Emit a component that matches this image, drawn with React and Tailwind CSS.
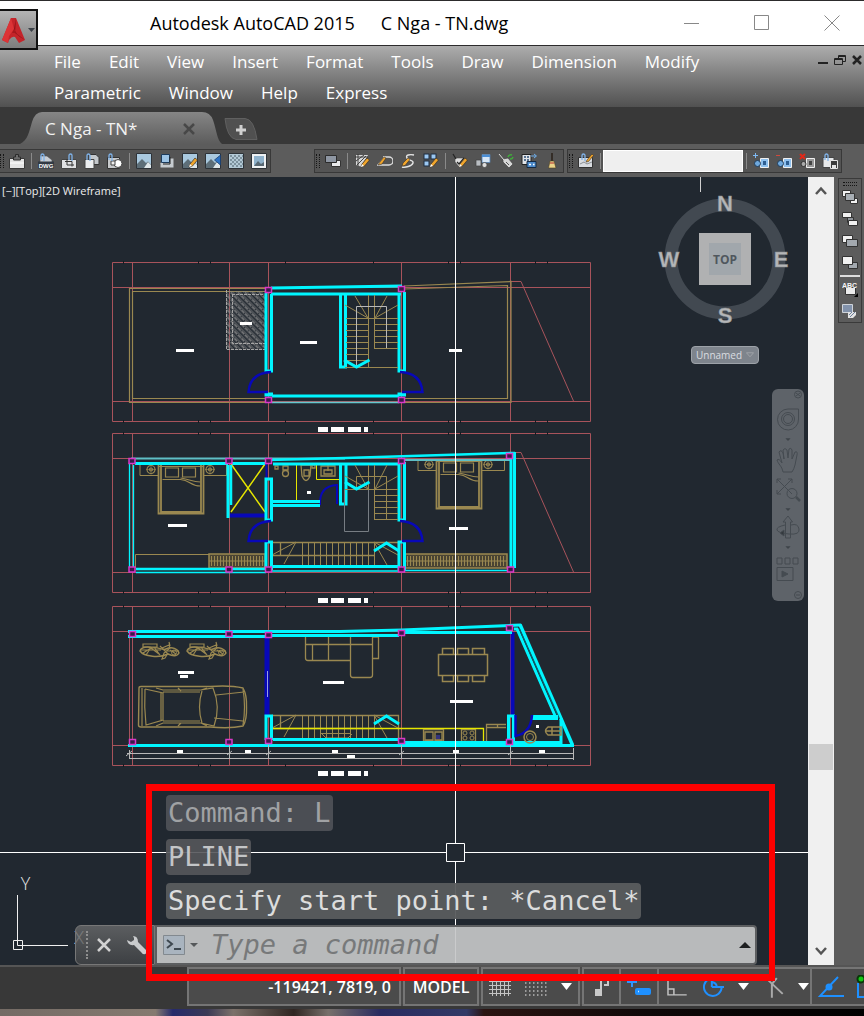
import React, { useState } from "react";

const MENUS = [
  "File", "Edit", "View", "Insert", "Format", "Tools", "Draw",
  "Dimension", "Modify", "Parametric", "Window", "Help", "Express",
];

const RED = "#a8535b";
const BROWN = "#9a8850";
const CYAN = "#00f6ff";
const BLUE = "#0808b8";
const MAGENTA = "#d838c8";
const YELLOW = "#e6e600";

const range = (from, to, step) => {
  const out = [];
  for (let v = from; v <= to; v += step) out.push(v);
  return out;
};

/* ---------- toolbar icons ---------- */

const Pencil = () => (
  <>
    <path d="M7 14 8 11 13 5 15.5 7 10.5 13Z" fill="#f0a52c" stroke="#3a3126" strokeWidth=".7" />
    <path d="M7 14 8 11 10 13Z" fill="#fff" />
  </>
);

const Clip = ({ x = 4 }) => (
  <path d={`M${x} 7V2.5a1.5 1.5 0 0 1 3 0V8`} fill="none" stroke="#7fb2e8" strokeWidth="1.3" />
);

const Picture = () => (
  <>
    <path d="M.5 .5h15v15H.5z" fill="#a9c9df" stroke="#2e3338" />
    <path d="M1 11 6 6l4 4 2-1.5 3 3V15H1Z" fill="#5d6e78" />
    <path d="M8 15l4-6 3 3v3Z" fill="#dfe7ea" />
  </>
);

const ICONS = {
  paste: (
    <>
      <path d="M.5 5.5h15v10H.5z" fill="#e4e4e4" stroke="#3a3a3a" />
      <path d="M4.5 7V4h2V1.5h3V4h2v3z" fill="#6c6c6c" stroke="#2c2c2c" />
      <path d="M1 10h14" stroke="#fff" />
    </>
  ),
  dwg: (
    <>
      <path d="M2 3h7l5 4v7H2z" fill="#c9ced4" stroke="#4a4a4a" strokeWidth=".6" />
      <Clip x={3} />
      <rect x="0" y="8.5" width="16" height="7" fill="#333a44" />
      <text x="8" y="14.5" textAnchor="middle" fontSize="6" fontWeight="700" fill="#fff" fontFamily="Liberation Sans, sans-serif">DWG</text>
    </>
  ),
  crop: (
    <>
      <path d="M.5 6.5h15v9H.5z" fill="#dfe0e2" stroke="#444" />
      <path d="M4 8.5h7v5M6 6v6h7" fill="none" stroke="#333" />
      <Clip x={8} />
    </>
  ),
  sheets: (
    <>
      <path d="M5 1.5h7l3 3v7H5z" fill="#c4c8cc" stroke="#333" />
      <path d="M1 6.5h9v9H1z" fill="#eceef0" stroke="#444" />
      <Clip x={3} />
    </>
  ),
  shapes: (
    <>
      <path d="M.5 4.5h12v11H.5z" fill="#c8cacc" stroke="#333" />
      <circle cx="11" cy="10.5" r="4" fill="#fff" stroke="#444" />
      <path d="M4 8h4v4H4z" fill="#eee" stroke="#444" />
      <Clip x={2} />
    </>
  ),
  picture: <Picture />,
  clipPicture: (
    <>
      <path d="M5 5h10v10H1v-4" fill="#c7ccd0" stroke="#555" />
      <path d="M2.5 1.5h8v8h-8z" fill="#9cc4e6" stroke="#1c3b5c" />
      <path d="M11 4v7H4" fill="none" stroke="#222" />
    </>
  ),
  editPicture: (
    <>
      <Picture />
      <Pencil />
    </>
  ),
  flagPicture: (
    <>
      <Picture />
      <path d="M15.5 2v10L9.5 7Z" fill="#2c72c4" stroke="#173b6a" strokeWidth=".7" />
    </>
  ),
  checker: (
    <>
      <path d="M.5 .5h15v15H.5z" fill="#b3c9d6" stroke="#2e3338" />
      <path d="M2 3h13M2 7h13M2 11h13" stroke="#7d929e" strokeWidth="2" strokeDasharray="2 2" />
      <path d="M4 5h11M4 9h11M4 13h11" stroke="#7d929e" strokeWidth="2" strokeDasharray="2 2" />
    </>
  ),
  frame: (
    <>
      <path d="M.5 .5h15v15H.5z" fill="#eef1f3" stroke="#2e3338" />
      <path d="M3 3h10v10H3z" fill="#8fb2cc" />
      <path d="M3 13l4-5 3 3 3-2v4z" fill="#586873" />
    </>
  ),
  order: (
    <>
      <path d="M6.5 7.5h9v6h-9z" fill="#e9eaec" stroke="#333" />
      <path d="M.5 2.5h11v7H.5z" fill="#8e96a2" stroke="#2b2b2b" />
    </>
  ),
  hatchEdit: (
    <>
      <path d="M2 2h12L8 14 2 12z" fill="#d9d9d9" />
      <path d="M1 4h13M4 1v12M2 8l8-6M3 12l9-9M7 13l6-8" stroke="#333" strokeWidth=".9" />
      <Pencil />
    </>
  ),
  polyEdit: (
    <>
      <path d="M6 4h6a3.5 3.5 0 0 1 0 8H1l7-8" fill="none" stroke="#ddd" strokeWidth="1.4" />
      <path d="M1 12l2-3 4-5 2 1-4 6z" fill="#f0a52c" stroke="#3a3126" strokeWidth=".6" />
    </>
  ),
  splineEdit: (
    <>
      <path d="M14 2c-4-1-9 0-7 3s7 2 6 5-8 5-11 4" fill="none" stroke="#e4e4e4" strokeWidth="1.4" />
      <path d="M2 13l1-3 5-5 2 1.5-5 6z" fill="#f0a52c" stroke="#3a3126" strokeWidth=".6" />
    </>
  ),
  arrayEdit: (
    <>
      {[[1, 1], [8, 1], [1, 8]].map(([x, y]) => (
        <rect key={`${x}-${y}`} x={x} y={y} width="5" height="5" fill="#9cc8f2" stroke="#1c2c40" />
      ))}
      <Pencil />
    </>
  ),
  attEdit: (
    <>
      <path d="M3 5h10v4l-5 6-5-6z" fill="#dedede" stroke="#444" strokeWidth=".6" />
      <path d="M1 1l3 5M5 9l2 2 5-6" fill="none" stroke="#222" strokeWidth="1.2" />
      <Pencil />
    </>
  ),
  blockAtt: (
    <>
      <path d="M7 1.5h8v8H7z" fill="#d7e7f7" stroke="#5581b0" strokeWidth=".8" />
      <path d="M7 2h8v2H7z" fill="#4a8ed6" />
      <path d="M1 7h5v6H1z" fill="#b9bdc2" stroke="#444" strokeWidth=".7" />
      <circle cx="9.5" cy="12" r="2.5" fill="#ddd" stroke="#444" strokeWidth=".7" />
    </>
  ),
  sync: (
    <>
      <path d="M5 6l5-1 5 6-4 4-6-6z" fill="#d6d6d6" stroke="#444" strokeWidth=".7" />
      <path d="M1 1l5 6" stroke="#ddd" />
      <path d="M8 9l3 3" stroke="#555" />
      <path d="M10 4a3 3 0 0 1 4-2M15 4a3 3 0 0 1-3 2" fill="none" stroke="#3fae3a" strokeWidth="1.5" />
    </>
  ),
  extract: (
    <>
      <path d="M1 1.5h9v10H1z" fill="#e1e4e8" stroke="#222" />
      <path d="M3 4h2M6 4h2M3 7h2M6 7h2" stroke="#2b4c74" strokeWidth="1.5" />
      <path d="M6 8.5h9v6H6z" fill="#4d8bcb" stroke="#152a44" />
      <path d="M8 11.5h2M12 11.5h1.5" stroke="#fff" strokeWidth="1.5" />
      <path d="M10 3h5M13 1l2.5 2L13 5" fill="none" stroke="#6faeea" />
    </>
  ),
  broom: (
    <>
      <path d="M8 0v8" stroke="#2a2018" strokeWidth="1.5" />
      <path d="M6 8h4l2 7H4.5z" fill="#ecd48a" stroke="#4d4020" strokeWidth=".6" />
      <path d="M6 10h4" stroke="#b03030" />
    </>
  ),
  sheetEdit: (
    <>
      <path d="M.5 4.5h14v10H.5z" fill="#d9dce0" stroke="#333" />
      <path d="M2 11l4-2 3 2 5-2" fill="none" stroke="#8b8f94" />
      <Clip x={4} />
      <path d="M8 9l1-2 5-6 1.5 1.5-5 6z" fill="#f0a52c" stroke="#3a3126" strokeWidth=".6" />
    </>
  ),
  viewAdd: (
    <>
      <path d="M7.5 5.5h8v9h-8z" fill="#8ec0ee" stroke="#f0f0f0" />
      <path d="M10 8h3v4h-3z" fill="#2d5e92" />
      <circle cx="4.5" cy="10.5" r="3" fill="#6fa8dc" stroke="#1e3c5c" />
      <path d="M2.5 0v5M0 2.5h5" stroke="#7fbbf5" />
    </>
  ),
  viewSub: (
    <>
      <path d="M7.5 5.5h8v9h-8z" fill="#8ec0ee" stroke="#f0f0f0" />
      <path d="M10 8h3v4h-3z" fill="#2d5e92" />
      <circle cx="4.5" cy="10.5" r="3" fill="#6fa8dc" stroke="#1e3c5c" />
      <path d="M0 2.5h4" stroke="#d04a3c" />
    </>
  ),
  viewDel: (
    <>
      <path d="M7.5 5.5h8v9h-8z" fill="#999" stroke="#eee" />
      <path d="M10 8h3v4h-3z" fill="#444" />
      <circle cx="4.5" cy="11" r="2.5" fill="#aaa" stroke="#333" />
      <path d="M1 1l5 5M6 1 1 6" stroke="#e02818" strokeWidth="2" />
    </>
  ),
  saveView: (
    <>
      <path d="M1 4.5h11v10H1z" fill="#e6e8ea" stroke="#444" />
      <Clip x={3} />
      <path d="M8.5 7.5h7v8h-7z" fill="#3c3c3c" stroke="#e6e6e6" />
      <path d="M10 12h4v3h-4z" fill="#e6e6e6" />
    </>
  ),
  toFront: (
    <>
      <path d="M.5 1.5h8v6h-8zM8.5 9.5h7v5h-7z" fill="#f1f1f1" stroke="#333" />
      <path d="M3.5 4.5h9v7h-9z" fill="#a7adb3" stroke="#333" />
    </>
  ),
  toBack: (
    <>
      <path d="M5.5 6.5h6v5h-6z" fill="#8d9298" stroke="#333" />
      <path d="M.5 1.5h9v5h-9zM6.5 9.5h9v5h-9z" fill="#f1f1f1" stroke="#333" />
    </>
  ),
  above: (
    <>
      <path d="M.5 2.5h10v7H.5z" fill="#f1f1f1" stroke="#333" />
      <path d="M4.5 6.5h11v7h-11z" fill="#a3a9af" stroke="#333" />
    </>
  ),
  under: (
    <>
      <path d="M6.5 7.5h9v6h-9z" fill="#a3a9af" stroke="#333" />
      <path d="M.5 1.5h10v8H.5z" fill="#f1f1f1" stroke="#333" />
    </>
  ),
  abc: (
    <>
      <path d="M3.5 6.5h10v7h-10z" fill="#ececec" stroke="#333" />
      <text x="0" y="7" fontSize="7" fontWeight="700" fill="#f5f5f5" fontFamily="Liberation Sans, sans-serif">ABC</text>
      <path d="M16 12v4h-4z" fill="#000" />
    </>
  ),
  hatchBack: (
    <>
      <path d="M.5 1.5h10v8H.5z" fill="#8292ab" stroke="#cfd4da" />
      <path d="M6 9h8v3l-3 3H6z" fill="#e3e3e3" />
      <path d="M8 14l5-5M7 12l3-3" stroke="#6c7f9c" />
    </>
  ),
};

const ToolIcon = ({ name }) => (
  <svg viewBox="0 0 16 16" className="h-4 w-4" aria-hidden>
    {ICONS[name]}
  </svg>
);

const ToolButton = ({ name }) => (
  <button aria-label={name} className="flex h-5 w-[23px] shrink-0 items-center justify-center hover:bg-white/10">
    <ToolIcon name={name} />
  </button>
);

const Divider = () => <span className="ml-[3px] mr-0.5 h-4 w-px shrink-0 bg-[#8a8a8a]" />;

const Grip = ({ className = "mx-px" }) => (
  <span className={`h-3.5 w-1 shrink-0 border-x border-dotted border-[#161616] ${className}`} />
);

const ToolGroup = ({ children, className = "" }) => (
  <div className={`flex h-6 items-center border border-[#383838] bg-[#545454] ${className}`}>{children}</div>
);

/* ---------- floor plans ---------- */

const Line = ({ d, c = BROWN, w = 1, ...rest }) => (
  <path d={d} fill="none" stroke={c} strokeWidth={w} {...rest} />
);

const Tags = ({ items }) =>
  items.map(([x, y, w, h = 3]) => <rect key={`${x}-${y}`} x={x} y={y} width={w} height={h} fill="#fff" />);

const Columns = ({ items }) =>
  items.map(([x, y]) => (
    <rect key={`${x}-${y}`} x={x - 3} y={y - 2.5} width="6" height="5" fill="#3a1a4a" stroke={MAGENTA} strokeWidth="1.5" />
  ));

// Axis grid shared by the three floors
const Axes = ({ top }) => (
  <g>
    <Line
      c={RED}
      d={`M112.5 ${top}.5H590.5V${top + 159}.5H112.5Z M132.5 ${top}V${top + 159} M229.5 ${top}V${top + 159} M268.5 ${top}V${top + 159} M401.5 ${top}V${top + 159} M510.5 ${top}V${top + 159} M112 ${top + 25}.5H590 M112 ${top + 139}.5H590`}
    />
    {[123, 198, 210, 285, 373, 448, 460, 535, 547].map((x) => (
      <Line key={x} c="#141a20" d={`M${x}.5 ${top - 1}v3 M${x}.5 ${top + 158}v3`} />
    ))}
    <Tags items={[[318, top + 165, 10, 5], [331, top + 165, 13, 5], [348, top + 165, 13, 5], [364, top + 165, 4, 5]]} />
  </g>
);

const Bed = ({ x, y }) => (
  <g transform={`translate(${x} ${y})`}>
    <Line w={1.8} d="M0 0V48.5H45V0 M2.5 0V47H42.5V0" />
    <Line w={1.2} d="M0 1.5H45 M7 3h13v9H7z M24 3h13v9H24z M4 14.5H22C32 15 31 21 42 21 M22 13C30 14 34 17 42 17" />
    <Line d="M-18.5 0V10.5H0 M45 10.5H68V0" />
    {[-7.5, 51.5].map((cx) => (
      <g key={cx}>
        <circle cx={cx} cy="4.5" r="4" fill="none" stroke={BROWN} strokeWidth="1.2" />
        <circle cx={cx} cy="4.5" r="1.5" fill="none" stroke={BROWN} strokeWidth="1.2" />
        <Line d={`M${cx - 5} 4.5h10 M${cx} -.5v10`} w={0.6} />
      </g>
    ))}
  </g>
);

const LongStair = ({ y }) => (
  <g>
    <Line d={`M272 ${y}.5H398.5V${y + 23} M280.5 ${y + 13}V${y} M272 ${y + 13}.5H375`} w={1.3} />
    <Line d={range(302, 375, 6).map((x) => `M${x}.5 ${y}V${y + 23}`).join(" ")} />
    <Line d={`M296 ${y}L272 ${y + 13} M296 ${y}L284 ${y + 22} M374 ${y}L387 ${y + 23} M374 ${y}L398 ${y + 13}`} />
    <Line c={CYAN} w={3} d={`M374 ${y + 9}L386.5 ${y + 1}L399 ${y + 9}`} />
  </g>
);

const Wardrobe = ({ x, y, w }) => (
  <g>
    <rect x={x} y={y} width={w} height="14" fill="#4a4433" stroke={BROWN} strokeWidth="1.5" />
    <Line d={range(x + 2, x + w - 2, 3).map((v) => `M${v}.5 ${y + 2}v10`).join(" ")} />
    <Line d={`M${x} ${y + 7}h${w}`} />
  </g>
);

const Motorbike = ({ x }) => (
  <g transform={`translate(${x} 642)`}>
    <Line w={1.4} d="M0 9C1 5 8 4 12 6C18 4 22 9 26 7C32 4 38 7 39 11C37 15 32 14 28 12C20 16 4 15 0 9Z" />
    <Line w={1.2} d="M3 2h14v3H3z M1 8h20 M3 11l8-5 8 6 M6 13l4-6 M14 5l6 8 M22 6l7-3 1 3-6 5 -2 6 3-1 3-5 M20 4l8 8 M30 8l6 4 M29 0l1 4 M25 9h14" />
    <circle cx="34" cy="10.5" r="2.5" fill="none" stroke={BROWN} />
  </g>
);

const Car = () => (
  <g>
    <Line w={1.4} d="M139 688Q139 686.5 141 686.5H210Q230 685 243 688Q247 695 246.5 707Q247 720 243 726Q230 729 210 727H141Q138.5 727 138.5 725Z" />
    <Line w={1.2} d="M142 688V726 M145 689L163 693V720L146 725Q144 707 145 689 M161 693V720 M156 688L163 690H201L207 688 M156 726L163 723H201L207 726 M202 691Q197 707 202 723 M201 690L213 688Q221 707 214 726L201 723 M216 695L244 692 M214 718L243 721 M178 688l3 3 M178 726l3-3 M163 692H200 M163 721H200 M243 689Q246 707 243 725" />
  </g>
);

const TopFloor = () => (
  <g>
    <Axes top={262} />
    <Line c={RED} d="M510 281.5H521L573.5 401" />
    <Line w={1.2} d="M268 288.5H129.5V402.5H268 M268 291.5H132.5V398.5H268 M404 286L511 281.5V402.5H404 M404 289L507.5 285.5V398.5H404" />
    <rect x="226" y="291" width="40" height="58.5" fill="url(#hatch)" />
    <Line c="#a5a5a5" d="M226.5 290V349.5H265 M232.5 294V343.5H265 M232 294.5H264" strokeDasharray="3 1" />
    {/* walls */}
    <Line c={CYAN} w={3} d="M271 288L402 286 M271 294H401 M266 293V371H271.5V294 M340.5 294V367H345.5V294 M399 293V371H404.5V292 M272 396H399" />
    <Line c="#65c8ce" d="M272 402.5H399" w={1.5} />
    <Line c={CYAN} w={4} d="M264.5 394.5H273 M397.5 394.5H406" />
    <Columns items={[[268.5, 290], [268.5, 400], [401.5, 289], [401.5, 400]]} />
    <Line c={BLUE} w={2.5} d="M268 392H248.5Q250 373 271 372 M402 392H422.5Q421 373 400 372" />
    {/* stair */}
    <Line d={range(318, 360, 6).map((y) => `M346 ${y}.5H368`).join(" ")} />
    <Line d={range(318, 348, 6).map((y) => `M374 ${y}.5H398`).join(" ")} />
    <Line d="M368.5 295V367 M374.5 295V348 M368 318.5H374 M368 318L345 305 M368 318L355 296 M375 318L387 296 M375 318L398 305 M345 367.5H398" />
    <Line c="#b9b9b9" d="M356.5 366V306.5H386.5V348" />
    <Line c={CYAN} w={3} d="M344 360L356.5 367L369.5 360" />
    <Tags items={[[176, 349, 18], [240, 322, 12], [300, 341, 17], [449, 349, 13]]} />
  </g>
);

const MiddleFloor = () => (
  <g>
    <Axes top={433} />
    <Line c={RED} d="M512 452.5H521L573.5 572" />
    <Bed x={158.5} y={465} />
    <Bed x={436.5} y={460} />
    <Line d="M135.5 568V554.5H210" />
    <Wardrobe x={209} y={554} w={56} />
    <Wardrobe x={405} y={554} w={102} />
    <LongStair y={542} />
    {/* lift shaft */}
    <Line c={YELLOW} w={1.5} d="M231 464L265 512 M265 464L231 512" />
    <Line c={BLUE} w={4} d="M230 515.5H266" />
    {/* bathroom */}
    <Line c={YELLOW} d="M296.5 465V501.5H272 M316.5 465V479.5H339" />
    <Line w={1.3} d="M301 465h10l-1 11q-4 9-8 0z M304 470h5v6h-5z M321 466h14v10h-14z M324 470h8v4h-8z M328 465v6" />
    <Line w={1.3} d="M283 466h5v4h-5z M275 466h3v3h-3z M312 465h3v3h-3z" />
    <circle cx="285.5" cy="473.5" r="3" fill="none" stroke={BROWN} strokeWidth="1.3" />
    <Line c={BLUE} w={2} d="M320 505Q319 486 337 485V504 M266.5 463V479" />
    {/* walls */}
    <Line c="#5fbfc6" w={2} d="M131 458.5H345 M404 460H510" />
    <Line c={CYAN} w={3} d="M135 463.5H228 M232 463.5H265 M273 464H399 M228 465V518 M266 479V520H271.5V479Z M340.5 464V504H346V464 M272 501.5H320 M272 505.5H320 M399 464V520H404.5V462 M266 570V542H271.5V570 M399 570V542H404.5V570 M272 566.5H399" />
    <Line c={CYAN} w={2.5} d="M268 460L345 458L512 453H515 M231 465V505 M136 569H266" />
    <Line c={CYAN} w={3} d="M511 458V567 M514.5 452V568" />
    <Line c={CYAN} w={1.3} d="M129.5 463V568 M133.5 465V567 M136 572.5H266 M272 571H399 M404 570.5H508" />
    <Columns items={[[132, 461], [229, 461], [268.5, 461], [401.5, 461], [509.5, 456], [132, 569.5], [229, 569.5], [268.5, 569.5], [401.5, 569.5], [510.5, 569.5]]} />
    <Line c={BLUE} w={2.5} d="M268 541H248.5Q250 522 271 521 M402 541H422.5Q421 522 400 521" />
    {/* stair */}
    <Line d={range(489, 519, 6).map((y) => `M374 ${y}.5H398`).join(" ")} />
    <Line d="M368.5 465V531 M374.5 465V519 M386.5 519V476.5H356.5V490 M345 489.5H374 M368 489L345 476 M368 489L355 465 M375 489L387 465 M375 489L398 476" />
    <Line c="#777d83" d="M344.5 490V531.5H368.5V490" />
    <Line c={CYAN} w={3} d="M345 482L356.5 489L369.5 482" />
    <Tags items={[[168, 524, 19], [449, 527, 19], [307, 491, 4]]} />
  </g>
);

const GroundFloor = () => (
  <g>
    <Axes top={606} />
    <Line c={RED} d="M129.5 637V742" />
    <Motorbike x={140} />
    <Motorbike x={187} />
    <Car />
    {/* living room */}
    <Line w={1.3} d="M305.5 637V658Q305.5 660.5 308 660.5H350 M312.5 644V660 M328.5 637V660 M305 644.5H372.5 M350.5 637V675Q350.5 677.5 353 677.5H370Q372.5 677.5 372.5 675V637 M372.5 658.5H378.5V637H372.5" />
    {/* dining table */}
    <Line w={1.5} d="M438.5 654.5H487.5V675.5H438.5Z M442.5 654V648.5H453.5V654 M457.5 654V648.5H468.5V654 M472.5 654V648.5H484.5V654 M442.5 676V681.5H453.5V676 M457.5 676V681.5H468.5V676 M472.5 676V681.5H484.5V676" />
    {/* kitchen */}
    <Line w={1.3} d="M423.5 729.5H443.5V741.5H423.5Z M425 732h8v8h-8z M435 732h7v8h-7z M461.5 729.5H475.5V741.5H461.5Z M486.5 741V724.5H506 M486 727.5H506 M497.5 724V727" />
    {[[465, 733], [472, 733], [465, 738], [472, 738]].map(([cx, cy]) => (
      <circle key={`${cx}-${cy}`} cx={cx} cy={cy} r="2" fill="none" stroke={BROWN} />
    ))}
    <rect x="436" y="735" width="4" height="4" fill="#34347c" />
    <LongStair y={715} />
    <Line d="M320 733.5H350 M322 734l4 4h22l4-4" />
    <Line c={YELLOW} d="M271.5 744V728.5H483.5V742" w={1.3} />
    {/* walls */}
    <Line c={BLUE} w={5} d="M267 637V716" />
    <Line c="#9aa0e0" d="M267.5 671V697" />
    <Line c={BLUE} w={4} d="M512.5 632V715" />
    <Line c={CYAN} w={3} d="M128 631.5H340L402 630L521 625 M128 636.5H268 M272 635.5H399 M404 632.5H512 M128 745.5H574 M266 740V716H271.5V740 M273 739.5H399 M404 742.5H561V718 M508.5 740V716H513.5V740Z" />
    <Line c={CYAN} w={3} d="M514 629H517L556.5 719" />
    <Line c={CYAN} w={3.5} d="M520 624.5L572.5 745" />
    <Line c="#0a5e6c" w={1.3} d="M519.5 629L559.5 719" />
    <Line c={CYAN} w={5} d="M532 717.5H558" />
    <Line c={BLUE} w={2.5} d="M515.5 715V736Q531 733 532 715" />
    <Line w={1.5} d="M561 727H548Q543 731 548 735H561Z M552 727V735 M546 731H561" />
    <circle cx="530" cy="737" r="6" fill="none" stroke={BROWN} strokeWidth="1.5" />
    <circle cx="530" cy="737" r="3.5" fill="none" stroke={BROWN} />
    <Columns items={[[132.5, 634], [229, 634], [268.5, 635], [401.5, 633], [509.5, 628], [132.5, 742], [229, 742], [268.5, 741], [401.5, 741], [509.5, 742]]} />
    {/* dimensions */}
    <Line c="#b8b8b8" d="M127 753.5H574 M129 758.5H574 M129.5 750V759 M573.5 748V760 M229.5 745V759 M268.5 745V759 M401.5 745V759 M510.5 745V759 M126 756l6-5 M227 755l5-4 M266 755l5-4 M399 755l5-4 M508 755l5-4" />
    <Tags items={[[178, 671, 16], [180, 675, 8], [323, 681, 21], [450, 700, 23], [536, 725, 3], [177, 750, 6], [245, 750, 6], [332, 750, 6], [347, 755, 8], [453, 750, 6], [539, 750, 6]]} />
  </g>
);

const Drawing = () => (
  <svg className="absolute inset-0 h-full w-full" role="img" aria-label="Floor plans">
    <defs>
      <pattern id="hatch" width="5" height="5" patternUnits="userSpaceOnUse" patternTransform="rotate(-45)">
        <path d="M0 0V5 M1.5 0V4 M3 0V5" stroke="#8f8f8f" strokeWidth=".8" />
      </pattern>
    </defs>
    <g transform="translate(0 -177)">
      <TopFloor />
      <MiddleFloor />
      <GroundFloor />
      {/* crosshair */}
      <Line c="#fff" d="M455.5 177V844 M455.5 862V965 M0 852.5H447 M464 852.5H808 M446.5 843.5H464.5V861.5H446.5Z" />
      <Line c="#d0d0d0" d="M700.5 177V192" />
      {/* UCS icon */}
      <Line c="#f0f0f0" d="M13.5 940.5H22.5V949.5H13.5Z M17.5 895V945.5H68" />
      <g fill="#e8e8e8" fontFamily="Open Sans, sans-serif" fontWeight="300" textAnchor="middle">
        <text x="25.5" y="890" fontSize="18">Y</text>
        <text x="79" y="944" fontSize="18">X</text>
      </g>
    </g>
  </svg>
);

/* ---------- canvas overlays ---------- */

const ViewCube = () => (
  <div className="absolute right-4 top-2 flex w-[136px] flex-col items-center">
    <svg viewBox="0 -8 136 152" className="h-[152px] w-[136px]" role="img" aria-label="View cube">
      <circle cx="69" cy="66" r="54" fill="none" stroke="#424951" strokeWidth="13" />
      <g fill="#b4b6b8" stroke="#8a8d90" strokeWidth=".4" fontFamily="Liberation Sans, Arial, sans-serif" fontWeight="700" fontSize="22" textAnchor="middle">
        <text x="69" y="18">N</text>
        <text x="125" y="74">E</text>
        <text x="69" y="130">S</text>
        <text x="13" y="74">W</text>
      </g>
      <rect x="43" y="40" width="52" height="52" fill="#b0b1b2" />
      <rect x="53" y="50" width="32" height="32" fill="#a1a7ac" />
      <text x="69" y="71" fill="#50575e" fontFamily="Open Sans, sans-serif" fontWeight="700" fontSize="12" textAnchor="middle">TOP</text>
    </svg>
    <button className="ml-0.5 mt-[9px] flex h-[18px] w-[68px] items-center justify-between rounded border border-[#9da2a8] bg-[#7e848c] px-1 text-[10px] text-[#dadde0]">
      Unnamed
      <svg viewBox="0 0 9 6" className="h-1.5 w-2" aria-hidden>
        <path d="M.5.5h8l-4 4.5z" fill="none" stroke="#a2a6aa" />
      </svg>
    </button>
  </div>
);

const NavBar = () => (
  <div className="absolute right-1 top-[212px] h-[212px] w-8 rounded-md bg-[#5e6369]">
    <svg viewBox="0 0 32 212" className="h-full w-full" fill="none" stroke="#454b51" role="img" aria-label="Navigation bar">
      <circle cx="26" cy="5.5" r="3.5" />
      <path d="M24 4l4 3M28 4l-4 3" />
      <path d="M16 20H26.5V30A10.5 10.5 0 1 1 16 20Z" />
      <circle cx="16" cy="30" r="6.5" />
      <circle cx="16" cy="30" r="4.5" />
      <path d="M14 49.5h4l-2 2zM14 119.5h4l-2 2zM14 157.5h4l-2 2z" fill="#33383d" />
      <path d="M11 83C10 77 6 75 5 71Q7 69 10 74L7 63Q9 60 11 64L12 70L11 61Q13 58 15 61L16 69L17 60Q19 58 20 61V70L23 63Q26 62 25 66L23 76Q22 80 20 83Z" />
      <path d="M5 90L20 105M20 90L5 105M5 94V90H9M16 90H20V94M5 101V105H9" />
      <circle cx="20" cy="104.5" r="5" />
      <path d="M24 108l4 4" strokeWidth="2.5" />
      <path d="M13.5 149V133H11L16 127L20.5 133H18.5V149Z" />
      <path d="M13 136Q4 138 5 141T17 145T27 140T19 136" />
      <path d="M8 144l4-3v6z" fill="#33383d" />
      <path d="M5 169h5v6H5zM13 169h5v6h-5zM21 169h5v6h-5zM5 178.5h16v13H5z" />
      <path d="M10 182v6l6-3z" fill="#454b51" />
      <circle cx="26" cy="206" r="3.5" />
      <path d="M24 206h4" />
    </svg>
  </div>
);

const HISTORY = [
  { text: "Command: L", tone: "bg-[#52555a]/85 text-[#a0a2a4]" },
  { text: "PLINE", tone: "bg-[#55575b]/90 text-[#c3c5c7]" },
  { text: "Specify start point: *Cancel*", tone: "bg-[#5a5c5e]/95 text-[#dcdddd]" },
];

const CommandLine = () => {
  const [value, setValue] = useState("");
  return (
    <div className="absolute bottom-0 left-[75px] right-[51px] font-['DejaVu_Sans_Mono',monospace] text-[27px]">
      <div className="ml-[91px] flex flex-col items-start gap-2 pb-1.5">
        {HISTORY.map(({ text, tone }) => (
          <p key={text} className={`h-9 whitespace-nowrap rounded px-0.5 leading-9 ${tone}`}>{text}</p>
        ))}
      </div>
      <div className="flex h-10 items-stretch">
        <div className="flex w-20 items-center rounded-l-md border border-[#777] bg-linear-to-b from-[#6a6b6c]/80 to-[#444648]/80 pl-2.5">
          <span className="h-7 border-l-2 border-dotted border-[#8f8f8f]" />
          <button aria-label="Close command line" className="ml-1 flex w-6 justify-center">
            <svg viewBox="0 0 14 14" className="h-3.5 w-3.5" stroke="#d2d2d2" strokeWidth="2.5" aria-hidden>
              <path d="M1 1l12 12M13 1 1 13" />
            </svg>
          </button>
          <button aria-label="Customize" className="ml-2.5">
            <svg viewBox="0 0 22 22" className="h-[22px] w-[22px]" aria-hidden>
              <path d="M7 2Q12 2 12 8L20 16Q22 19 19 20Q17 21 15 18L8 11Q2 12 1 6L5 8L8 6V4Z" fill="#c9cbcd" />
            </svg>
          </button>
        </div>
        <div className="flex min-w-0 flex-1 items-center rounded-r border-2 border-[#5c5e60] bg-[#c6c7c8]/92 pl-1.5 pr-1">
          <svg viewBox="0 0 22 20" className="h-5 w-[22px] shrink-0" aria-hidden>
            <path d="M.5.5h21v19H.5z" fill="#a9b4bf" stroke="#82898f" />
            <path d="M4 5l5 4-5 4M11 14h7" fill="none" stroke="#3e4850" strokeWidth="2" />
          </svg>
          <button aria-label="Recent commands" className="ml-1 shrink-0">
            <svg viewBox="0 0 10 6" className="h-1.5 w-2.5" aria-hidden><path d="M1 1h8L5 5z" fill="#55585a" /></svg>
          </button>
          <input
            aria-label="Command"
            value={value}
            onChange={(e) => setValue(e.target.value)}
            placeholder="Type a command"
            className="ml-3 h-9 min-w-0 flex-1 bg-transparent italic text-[#333] outline-none placeholder:text-[#77797a]"
          />
          <button aria-label="Expand history" className="shrink-0">
            <svg viewBox="0 0 12 6" className="h-1.5 w-3" aria-hidden><path d="M0 6h12L6 0z" fill="#1d1f20" /></svg>
          </button>
        </div>
      </div>
    </div>
  );
};

/* ---------- window frame ---------- */

const TitleBar = () => (
  <header className="relative flex h-[46px] items-center border-b border-t border-[#2c2b2c] bg-white text-black">
    <button aria-label="Application menu" className="absolute left-0 top-2 z-10 flex h-[41px] w-[38px] items-center border-2 border-l-0 border-[#111] bg-linear-to-b from-[#b4b4b4] to-[#7d7d7d]">
      <svg viewBox="0 0 36 28" className="h-7 w-9" aria-hidden>
        <path d="M11 2H16L25 24L19 27L15 21Q12 20 9 24L8 27L2 24Z" fill="#c4242a" />
        <path d="M11 2L14 13L9 20L8 27L2 24Z" fill="#dc3336" />
        <path d="M16 2L14 13L17 18L25 24L20 21L15 17Z" fill="#8e1218" />
        <path d="M12 17L14 13L16 17Z" fill="#a8181e" />
        <path d="M28 12h7l-3.5 4z" fill="#3b4148" />
      </svg>
    </button>
    <h1 className="flex flex-1 gap-[26px] whitespace-nowrap pl-[150px] text-[18px]">
      <span>Autodesk AutoCAD 2015</span>
      <span>C Nga - TN.dwg</span>
    </h1>
    <div className="flex items-center gap-[54px] pr-6">
      <button aria-label="Minimize"><svg viewBox="0 0 16 16" className="h-4 w-4" stroke="#888" aria-hidden><path d="M0 8.5h15" /></svg></button>
      <button aria-label="Maximize"><svg viewBox="0 0 16 16" className="h-4 w-4" stroke="#888" fill="none" aria-hidden><path d="M.5.5h14v14H.5z" /></svg></button>
      <button aria-label="Close"><svg viewBox="0 0 16 16" className="h-4 w-4" stroke="#888" aria-hidden><path d="M.5.5l15 15M15.5.5l-15 15" /></svg></button>
    </div>
  </header>
);

const MenuBar = () => (
  <div className="flex h-[61px] items-start bg-linear-to-b from-[#adadad] to-[#515151] pr-0.5">
    <nav className="flex flex-1 flex-wrap gap-x-7 pl-[54px] pr-8">
      {MENUS.map((m) => (
        <button key={m} className="h-[31px] text-[17px] leading-[31px] text-white">{m}</button>
      ))}
    </nav>
    <div className="mt-2 flex items-center gap-1.5 text-[#222]">
      <button aria-label="Minimize drawing"><svg viewBox="0 0 10 12" className="h-3 w-2.5" aria-hidden><path d="M0 9h10" stroke="currentColor" strokeWidth="2" /></svg></button>
      <button aria-label="Restore drawing">
        <svg viewBox="0 0 12 12" className="h-3 w-3" fill="none" stroke="currentColor" aria-hidden>
          <path d="M4.5 4V1.5h7V7.5H9M.5 4.5h8v6h-8zM.5 5.5h8M4 2.5h7" />
        </svg>
      </button>
      <button aria-label="Close drawing"><svg viewBox="0 0 10 12" className="h-3 w-2.5" aria-hidden><path d="M1 2l8 8M9 2l-8 8" stroke="currentColor" strokeWidth="2.5" /></svg></button>
    </div>
  </div>
);

const TabStrip = () => (
  <div className="flex h-[37px] items-end bg-[#383838] pl-5">
    <div className="relative h-8 w-[202px]">
      <svg viewBox="0 0 202 32" className="absolute inset-0 h-full w-full" aria-hidden>
        <defs>
          <linearGradient id="tab" x1="0" x2="0" y1="0" y2="1">
            <stop offset="0" stopColor="#868686" />
            <stop offset="1" stopColor="#5c5c5c" />
          </linearGradient>
        </defs>
        <path d="M0 32C8 28 9 20 12 10Q15 0 22 0H182Q190 0 193 8C197 20 197 28 202 32Z" fill="url(#tab)" />
      </svg>
      <div className="relative flex h-full items-center justify-between pl-[25px] pr-[27px] pt-0.5 text-[17px] text-[#f2f2f2]">
        <span>C Nga - TN*</span>
        <button aria-label="Close tab">
          <svg viewBox="0 0 12 12" className="h-3 w-3" stroke="#484848" strokeWidth="2.5" aria-hidden><path d="M1 1l10 10M11 1 1 11" /></svg>
        </button>
      </div>
    </div>
    <button aria-label="New tab" className="mb-1 ml-0.5">
      <svg viewBox="0 0 34 22" className="h-[22px] w-[34px]" aria-hidden>
        <path d="M1 .5H21Q30 1 33 21.5H12Q3 20 1 .5Z" fill="#505050" stroke="#606060" />
        <path d="M17 7v10M12 12h10" stroke="#d0d0d0" strokeWidth="3" />
      </svg>
    </button>
  </div>
);

const Toolbars = () => (
  <div className="flex h-[33px] items-center gap-[3px] bg-[#5c5c5c]">
    <ToolGroup className="mr-10 border-l-0">
      <Grip className="mr-px" />
      <ToolButton name="paste" />
      <Divider />
      {["dwg", "crop", "sheets", "shapes"].map((n) => <ToolButton key={n} name={n} />)}
      <Divider />
      {["picture", "clipPicture", "editPicture", "flagPicture", "checker", "frame"].map((n) => <ToolButton key={n} name={n} />)}
    </ToolGroup>
    <ToolGroup>
      <Grip />
      <ToolButton name="order" />
      <Divider />
      {["hatchEdit", "polyEdit", "splineEdit", "arrayEdit"].map((n) => <ToolButton key={n} name={n} />)}
      <Divider />
      {["attEdit", "blockAtt", "sync", "extract", "broom"].map((n) => <ToolButton key={n} name={n} />)}
    </ToolGroup>
    <ToolGroup>
      <Grip />
      <ToolButton name="sheetEdit" />
      <Divider />
      <input aria-label="View name" className="h-[22px] w-[140px] border border-white bg-[#efefef] px-1 text-sm text-black outline-none" />
      <Divider />
      {["viewAdd", "viewSub", "viewDel", "saveView"].map((n) => <ToolButton key={n} name={n} />)}
    </ToolGroup>
  </div>
);

const Scrollbar = () => (
  <div className="flex w-[26px] shrink-0 flex-col items-center justify-between bg-[#f0f0f0] py-2">
    <button aria-label="Scroll up">
      <svg viewBox="0 0 12 12" className="h-3 w-3" fill="none" stroke="#555" strokeWidth="2.5" aria-hidden><path d="M1 9l5-5.5L11 9" /></svg>
    </button>
    <div className="flex w-full flex-1 flex-col px-px">
      <span className="flex-[547]" />
      <span className="h-[26px] bg-[#cdcdcd]" />
      <span className="flex-[175]" />
    </div>
    <button aria-label="Scroll down">
      <svg viewBox="0 0 12 12" className="h-3 w-3" fill="none" stroke="#555" strokeWidth="2.5" aria-hidden><path d="M1 3l5 5.5L11 3" /></svg>
    </button>
  </div>
);

const Dock = () => (
  <aside className="w-[30px] shrink-0 bg-[#5c5c5c] pl-1 pr-0.5 pt-px">
    <div className="flex flex-col items-center border border-[#3a3a3a] pt-[3px]">
      <span className="h-1 w-3.5 border-y border-dotted border-[#161616]" />
      {["toFront", "toBack", "above", "under"].map((n) => (
        <button key={n} aria-label={n} className="flex h-[22px] items-center"><ToolIcon name={n} /></button>
      ))}
      <span className="my-px h-0.5 w-5 bg-[#ddd]" />
      {["abc", "hatchBack"].map((n) => (
        <button key={n} aria-label={n} className="flex h-[22px] items-center"><ToolIcon name={n} /></button>
      ))}
    </div>
  </aside>
);

const Caret = () => (
  <svg viewBox="0 0 12 8" className="h-2 w-3 shrink-0" aria-hidden><path d="M0 0h11L5.5 7z" fill="#fff" /></svg>
);

const cell = "flex items-center border-2 border-[#757575] shrink-0";

const StatusBar = () => (
  <footer className="flex h-11 border-t-2 border-[#555] bg-[#383838] pb-[3px] pl-[187px] text-[16px] font-semibold text-white">
    <div className="flex flex-1 gap-0.5 overflow-hidden bg-[#4b4b4b]">
      <div className={`${cell} w-[214px] justify-end pr-2`}>-119421, 7819, 0</div>
      <button className={`${cell} w-[76px] justify-center`}>MODEL</button>
      <div className={`${cell} w-[99px] gap-3.5 pl-1.5`}>
        <svg viewBox="0 0 22 20" className="h-5 w-[22px]" stroke="#c4c4c4" aria-hidden>
          <path d="M0 4.5h22M0 8.5h22M0 12.5h22M0 16.5h22M3.5 1v18M7.5 1v18M11.5 1v18M15.5 1v18M19.5 1v18" />
        </svg>
        <svg viewBox="0 0 22 20" className="h-5 w-[22px]" stroke="#b8b8b8" strokeWidth="1.5" strokeDasharray="1.5 2.5" aria-hidden>
          <path d="M0 2h22M0 6h22M0 10h22M0 14h22M0 18h22" />
        </svg>
        <Caret />
      </div>
      <div className={`${cell} flex-1 border-r-0`}>
        <button aria-label="Infer constraints" className="flex h-full w-[37px] shrink-0 items-center justify-center border-r-2 border-[#757575]">
          <svg viewBox="0 0 16 20" className="h-5 w-4" aria-hidden>
            <path d="M1 12h7v7H1z" fill="#c9c9c9" />
            <path d="M7 13V2H14V8H10" fill="none" stroke="#c9c9c9" strokeWidth="2" />
          </svg>
        </button>
        <button aria-label="Dynamic input" className="flex h-full w-[38px] shrink-0 items-center justify-center border-r-2 border-[#757575]">
          <svg viewBox="0 0 26 20" className="h-5 w-[26px]" aria-hidden>
            <path d="M6 0v10M1 5h10" stroke="#2f94ff" strokeWidth="2" />
            <rect x="9" y="11" width="16" height="7" rx="2" fill="#1e90ff" />
            <path d="M12 14.5h1" stroke="#cde6ff" strokeWidth="1.5" />
          </svg>
        </button>
        <div className="flex h-full w-[153px] shrink-0 items-center gap-3.5 border-r-2 border-[#757575] pl-2">
          <svg viewBox="0 0 20 20" className="h-5 w-5" fill="none" stroke="#c4c4c4" strokeWidth="1.5" aria-hidden><path d="M1 1v17h19M1 12h6v6" /></svg>
          <svg viewBox="0 0 24 22" className="h-[22px] w-6" fill="none" stroke="#2090ff" strokeWidth="2" aria-hidden><path d="M21 11a9 9 0 1 1-5-8M11 11h13M11 11V3M16 11q0-4-5-5" /></svg>
          <Caret />
          <svg viewBox="0 0 20 22" className="h-[22px] w-5" stroke="#aaa" strokeWidth="2" aria-hidden><path d="M1 1l18 17M8 7v15M8 8l5-6" /></svg>
          <Caret />
        </div>
        <div className="flex h-full items-center gap-3 pl-1.5">
          <svg viewBox="0 0 26 22" className="h-[22px] w-[26px] shrink-0" fill="none" stroke="#1e90ff" strokeWidth="2" aria-hidden><path d="M20 1L2 20H26" /><circle cx="11" cy="11" r="2.5" fill="#1e90ff" /></svg>
          <svg viewBox="0 0 16 24" className="h-6 w-4 shrink-0" fill="none" stroke="#1e90ff" strokeWidth="2" aria-hidden><path d="M2 8v14h14" /><circle cx="5" cy="4" r="3.5" fill="#16c516" stroke="#083808" /></svg>
        </div>
      </div>
    </div>
  </footer>
);

export default function App() {
  return (
    <div className="relative flex min-h-screen flex-col overflow-hidden bg-[#383838] font-['Open_Sans',sans-serif]">
      <TitleBar />
      <MenuBar />
      <TabStrip />
      <Toolbars />
      <main className="flex min-h-[780px] flex-1">
        <section className="relative min-w-0 flex-1 overflow-hidden bg-[#212830]">
          <Drawing />
          <p className="absolute left-0.5 top-1.5 text-[11px] text-[#ededed]">[−][Top][2D Wireframe]</p>
          <ViewCube />
          <NavBar />
          <CommandLine />
        </section>
        <Scrollbar />
        <Dock />
      </main>
      <StatusBar />
      <div className="h-[7px] bg-[linear-gradient(90deg,#746b65_0%,#857a70_18%,#262a6b_20%,#3b3a55_24%,#7c716a_27%,#302622_34%,#77706b_38%,#292b60_44%,#333a66_54%,#2b1512_56%,#0f0909_75%,#000_100%)]" />
      <div aria-hidden className="pointer-events-none absolute bottom-[35px] left-[146px] right-[89px] h-[197px] border-x-[6px] border-y-[7px] border-[#fe0000]" />
    </div>
  );
}
